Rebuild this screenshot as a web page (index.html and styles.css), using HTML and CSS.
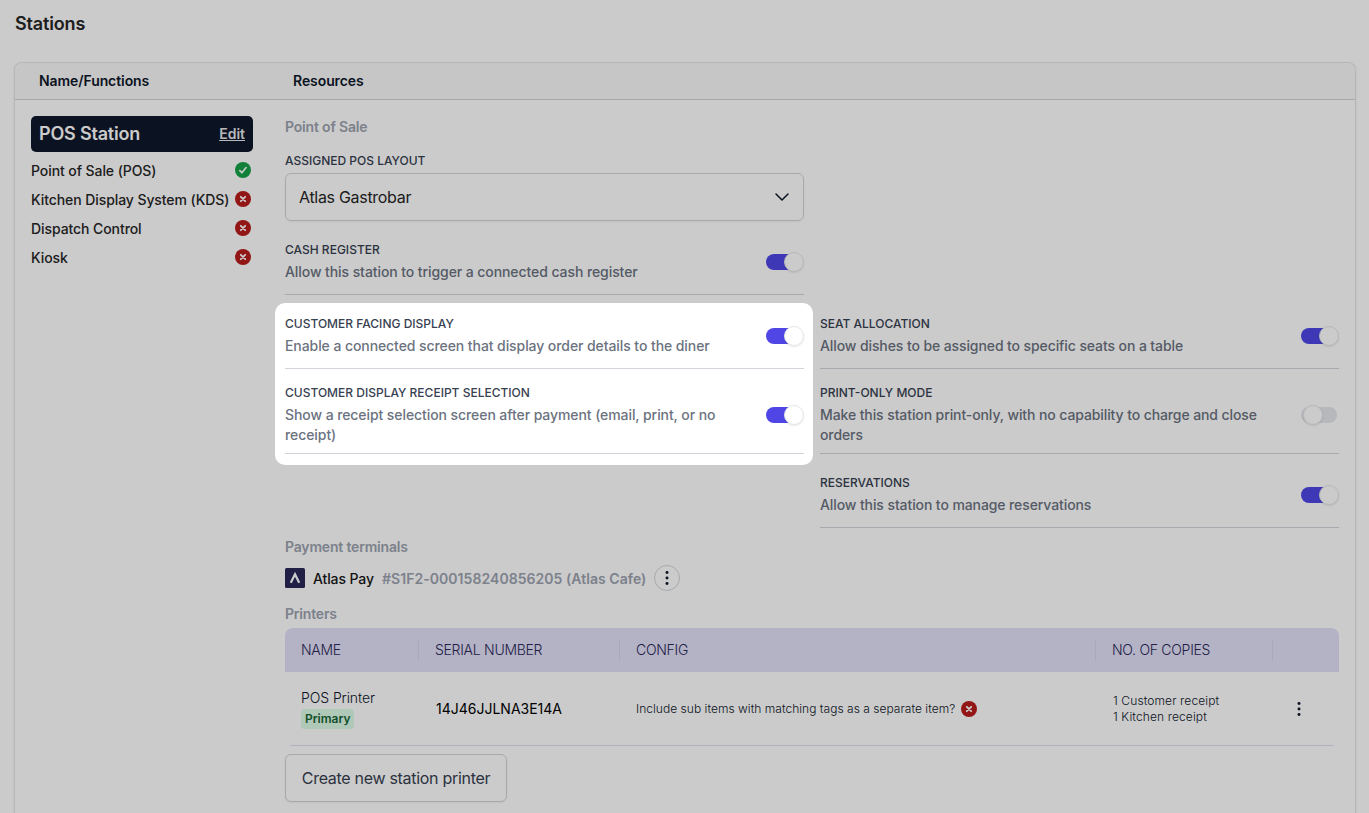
FILE: index.html
```html
<!DOCTYPE html>
<html lang="en">
<head>
    <meta charset="UTF-8">
    <meta name="viewport" content="width=device-width, initial-scale=1.0">
    <title>Stations</title>
    <link rel="stylesheet" href="styles.css">
</head>
<body>

<svg class="sprite" width="0" height="0">
    <symbol id="check" viewBox="0 0 16 16">
        <circle cx="8" cy="8" r="8" fill="#16a34a"/>
        <path d="M4.8 8.6l2.1 2.2 4.2-5.2" fill="none" stroke="#fff" stroke-width="1.6" stroke-linecap="round" stroke-linejoin="round"/>
    </symbol>
    <symbol id="cross" viewBox="0 0 16 16">
        <circle cx="8" cy="8" r="8" fill="#b91c1c"/>
        <path d="M5.8 5.8l4.4 4.4M10.2 5.8l-4.4 4.4" fill="none" stroke="#fff" stroke-width="1.8" stroke-linecap="round"/>
    </symbol>
    <symbol id="dots" viewBox="0 0 16 16">
        <circle cx="8" cy="1.8" r="1.7"/>
        <circle cx="8" cy="8" r="1.7"/>
        <circle cx="8" cy="14.2" r="1.7"/>
    </symbol>
</svg>

<h1>Stations</h1>

<div class="card">
    <div class="card-head">
        <div class="head-name">Name/Functions</div>
        <div>Resources</div>
    </div>
    <div class="card-body">
        <div class="functions">
            <div class="station">
                <span>POS Station</span>
                <a class="edit">Edit</a>
            </div>
            <div class="function"><span>Point of Sale (POS)</span><svg class="status"><use href="#check"/></svg></div>
            <div class="function"><span>Kitchen Display System (KDS)</span><svg class="status"><use href="#cross"/></svg></div>
            <div class="function"><span>Dispatch Control</span><svg class="status"><use href="#cross"/></svg></div>
            <div class="function"><span>Kiosk</span><svg class="status"><use href="#cross"/></svg></div>
        </div>

        <div class="resources">
            <div class="section-title">Point of Sale</div>
            <div class="settings">
                <div class="layout left">
                    <div class="label">ASSIGNED POS LAYOUT</div>
                    <div class="select">
                        <span>Atlas Gastrobar</span>
                        <svg width="16" height="16" viewBox="0 0 16 16"><path d="M2 5l6 6 6-6" fill="none" stroke="#0f172a" stroke-width="1.5" stroke-linecap="round" stroke-linejoin="round"/></svg>
                    </div>
                </div>
                <div class="setting left">
                    <div class="setting-text">
                        <div class="label">CASH REGISTER</div>
                        <div class="desc">Allow this station to trigger a connected cash register</div>
                    </div>
                    <div class="toggle on"><div class="thumb"></div></div>
                </div>
                <div class="setting left">
                    <div class="setting-text">
                        <div class="label">CUSTOMER FACING DISPLAY</div>
                        <div class="desc">Enable a connected screen that display order details to the diner</div>
                    </div>
                    <div class="toggle on"><div class="thumb"></div></div>
                </div>
                <div class="setting right">
                    <div class="setting-text">
                        <div class="label">SEAT ALLOCATION</div>
                        <div class="desc">Allow dishes to be assigned to specific seats on a table</div>
                    </div>
                    <div class="toggle on"><div class="thumb"></div></div>
                </div>
                <div class="setting tall left">
                    <div class="setting-text">
                        <div class="label">CUSTOMER DISPLAY RECEIPT SELECTION</div>
                        <div class="desc">Show a receipt selection screen after payment (email, print, or no receipt)</div>
                    </div>
                    <div class="toggle on"><div class="thumb"></div></div>
                </div>
                <div class="setting tall right">
                    <div class="setting-text">
                        <div class="label">PRINT-ONLY MODE</div>
                        <div class="desc">Make this station print-only, with no capability to charge and close orders</div>
                    </div>
                    <div class="toggle"><div class="thumb"></div></div>
                </div>
                <div class="setting right">
                    <div class="setting-text">
                        <div class="label">RESERVATIONS</div>
                        <div class="desc">Allow this station to manage reservations</div>
                    </div>
                    <div class="toggle on"><div class="thumb"></div></div>
                </div>
                <div class="spotlight"></div>
            </div>

            <div class="section-title">Payment terminals</div>
            <div class="terminal">
                <svg width="20" height="20" viewBox="0 0 20 20"><rect width="20" height="20" rx="1.5" fill="#2a2859"/><path d="M5.8 14.8L10 6.2l4.2 8.6" fill="none" stroke="#fff" stroke-width="2.2"/></svg>
                <span class="terminal-name">Atlas Pay</span>
                <span class="terminal-id">#S1F2-000158240856205 (Atlas Cafe)</span>
                <button class="more"><svg class="dots"><use href="#dots"/></svg></button>
            </div>

            <div class="section-title">Printers</div>
            <div class="table-head">
                <div>NAME</div>
                <div>SERIAL NUMBER</div>
                <div>CONFIG</div>
                <div>NO. OF COPIES</div>
                <div></div>
            </div>
            <div class="table-row">
                <div>
                    <div class="printer-name">POS Printer</div>
                    <span class="badge">Primary</span>
                </div>
                <div class="serial">14J46JJLNA3E14A</div>
                <div class="config">
                    <span>Include sub items with matching tags as a separate item?</span>
                    <svg class="status"><use href="#cross"/></svg>
                </div>
                <div class="copies">1 Customer receipt<br>1 Kitchen receipt</div>
                <div class="row-menu"><svg class="dots"><use href="#dots"/></svg></div>
            </div>
            <button class="create">Create new station printer</button>
        </div>
    </div>
</div>

</body>
</html>
```
FILE: styles.css
```css
* {
    box-sizing: border-box;
}

body {
    font-family: Inter, "Liberation Sans", sans-serif;
    font-size: 14px;
    line-height: 20px;
    letter-spacing: -0.08px;
    margin: 0;
    padding: 10px 13px 0 14px;
    height: 813px;
    overflow: hidden;
    background-color: white;
    color: #0f172a;
}

.sprite {
    position: absolute;
}

h1 {
    margin: 0 0 24px 1px;
    font-size: 18px;
    line-height: 28px;
    font-weight: 600;
    letter-spacing: -0.15px;
    color: #262626;
}

.card {
    height: 751px;
    border: 1px solid #e5e5e5;
    border-bottom: none;
    border-radius: 8px 8px 0 0;
    box-shadow: 0 1px 3px rgba(0, 0, 0, 0.08);
}

.card-head {
    display: flex;
    height: 37px;
    padding: 0 24px;
    align-items: center;
    background-color: #f9f9f9;
    border-bottom: 1px solid #d4d4d4;
    border-radius: 8px 8px 0 0;
    font-weight: 600;
}

.head-name {
    width: 254px;
}

.card-body {
    display: flex;
    gap: 32px;
    padding: 16px;
}

.functions {
    width: 222px;
}

.station {
    display: flex;
    height: 36px;
    margin-bottom: 4px;
    padding: 0 8px;
    align-items: center;
    justify-content: space-between;
    background-color: #0f172a;
    border-radius: 5px;
    color: white;
    font-size: 18px;
    font-weight: 600;
    letter-spacing: -0.2px;
}

.edit {
    font-size: 14px;
    letter-spacing: 0;
    color: #e5e7eb;
    text-decoration: underline;
}

.function {
    display: flex;
    height: 29px;
    padding-right: 2px;
    align-items: center;
    justify-content: space-between;
    font-weight: 500;
    color: #262626;
    white-space: nowrap;
}

.function span {
    padding-top: 1px;
}

.function .status {
    margin-bottom: 2px;
}

.status {
    width: 16px;
    height: 16px;
    flex-shrink: 0;
}

.resources {
    width: 1054px;
}

.section-title {
    font-weight: 600;
    line-height: 22px;
    letter-spacing: -0.18px;
    color: #9ca3af;
}

.settings {
    position: relative;
    display: grid;
    grid-template-columns: 519px 519px;
    column-gap: 16px;
    padding-top: 15px;
    margin-bottom: 8px;
}

.left {
    grid-column: 1;
}

.right {
    grid-column: 2;
}

.label {
    font-size: 12px;
    line-height: 16px;
    font-weight: 500;
    letter-spacing: 0;
    color: #374151;
}

.select {
    display: flex;
    height: 48px;
    margin-top: 4px;
    padding: 0 13px;
    align-items: center;
    justify-content: space-between;
    border: 1px solid #d1d5db;
    border-radius: 6px;
    box-shadow: 0 1px 2px rgba(0, 0, 0, 0.05);
    font-size: 16px;
    letter-spacing: -0.3px;
    color: #262626;
}

.setting {
    display: flex;
    height: 74px;
    padding: 20px 0 12px;
    align-items: center;
    justify-content: space-between;
    border-bottom: 1px solid #d1d5db;
}

.tall {
    height: 85px;
    padding: 15px 0 8px;
}

.setting-text {
    width: 449px;
    padding-top: 1px;
}

.desc {
    margin-top: 4px;
    font-weight: 500;
    color: #6b7280;
}

.right .desc {
    letter-spacing: -0.1px;
}

.toggle {
    width: 36px;
    height: 16px;
    margin: 1px 2px 0 0;
    border-radius: 8px;
    background-color: #e5e7eb;
}

.toggle.on {
    background-color: #4f46e5;
}

.thumb {
    width: 20px;
    height: 20px;
    margin: -2px 0 0 2px;
    border: 1px solid #e5e7eb;
    border-radius: 50%;
    background-color: white;
    box-shadow: 0 1px 2px rgba(0, 0, 0, 0.1);
}

.on .thumb {
    margin-left: 18px;
}

/* dims everything except the customer display settings */
.spotlight {
    position: absolute;
    top: 165px;
    left: -10px;
    width: 538px;
    height: 162px;
    border-radius: 10px;
    box-shadow: 0 0 0 2000px rgba(0, 0, 0, 0.204);
}

.terminal {
    display: flex;
    height: 45px;
    align-items: center;
    font-weight: 600;
    padding-bottom: 5px;
}

.terminal-name {
    margin: 2px 8px 0;
    font-weight: 500;
    letter-spacing: -0.1px;
    color: #171717;
}

.terminal-id {
    margin: 2px 8px 0 0;
    letter-spacing: 0.05px;
    color: #9ca3af;
}

.more {
    display: flex;
    width: 26px;
    height: 26px;
    padding: 0;
    align-items: center;
    justify-content: center;
    border: 1px solid #d1d5db;
    border-radius: 50%;
    background-color: white;
}

.dots {
    width: 14px;
    height: 14px;
    fill: #0f172a;
}

.table-head, .table-row {
    display: grid;
    align-items: center;
    font-weight: 300;
}

.table-head {
    grid-template-columns: 134px 201px 476px 177px 66px;
    height: 44px;
    margin-top: 3px;
    background-color: #e2e0f8;
    border-radius: 8px 8px 0 0;
    color: #2a2859;
    letter-spacing: -0.28px;
}

.table-head div {
    height: 22px;
    line-height: 22px;
    padding-left: 16px;
    border-right: 1px solid #d6d4ea;
}

.table-head div:last-child {
    border-right: none;
}

.table-row {
    grid-template-columns: 130px 200px 477px 175px 62px;
    height: 74px;
    margin: 0 5px;
    border-bottom: 1px solid #dcdfee;
}

.table-row > div {
    padding-left: 11px;
}

.badge {
    display: inline-block;
    padding: 0 4px;
    border-radius: 4px;
    background-color: #dcfce7;
    color: #166534;
    font-size: 12px;
    font-weight: 600;
    letter-spacing: 0;
}

.table-row .serial {
    padding-left: 16px;
    color: black;
    font-weight: 400;
    letter-spacing: 0;
}

.table-row .config {
    display: flex;
    gap: 6px;
    padding-left: 16px;
    align-items: center;
    font-size: 12px;
    letter-spacing: 0.03px;
}

.table-row .copies {
    padding-left: 16px;
    font-size: 12px;
    line-height: 16px;
    letter-spacing: 0.12px;
}

.table-row .row-menu {
    display: flex;
    padding-left: 20px;
}

.create {
    display: block;
    width: 222px;
    height: 48px;
    margin-top: 8px;
    padding: 0;
    border: 1px solid #d1d5db;
    border-radius: 6px;
    background-color: white;
    box-shadow: 0 1px 2px rgba(0, 0, 0, 0.05);
    font-family: inherit;
    font-size: 16px;
    letter-spacing: -0.3px;
    color: #374151;
}
```
